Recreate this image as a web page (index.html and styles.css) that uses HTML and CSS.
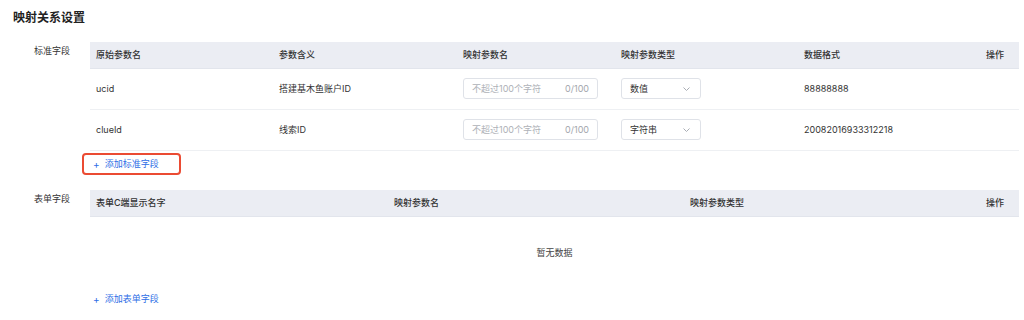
FILE: index.html
```html
<!DOCTYPE html>
<html lang="zh-CN">
<head>
<meta charset="utf-8">
<title>映射关系设置</title>
<link rel="stylesheet" href="styles.css">
</head>
<body>
<div class="page">
  <h1 class="title">映射关系设置</h1>

  <section class="section">
    <div class="label">标准字段</div>
    <div class="content">
      <table class="tbl std">
        <colgroup>
          <col class="c1"><col class="c2"><col class="c3"><col class="c4"><col class="c5"><col class="c6">
        </colgroup>
        <thead>
          <tr><th>原始参数名</th><th>参数含义</th><th>映射参数名</th><th>映射参数类型</th><th>数据格式</th><th class="op">操作</th></tr>
        </thead>
        <tbody>
          <tr>
            <td>ucid</td>
            <td>搭建基木鱼账户ID</td>
            <td><div class="input"><span class="ph">不超过100个字符</span><span class="count">0/100</span></div></td>
            <td><div class="select"><span>数值</span><svg class="chev" width="7" height="4" viewBox="0 0 7 4"><polyline points="0.5,0.5 3.5,3.5 6.5,0.5" fill="none" stroke="#a9adb4" stroke-width="1"/></svg></div></td>
            <td>88888888</td>
            <td></td>
          </tr>
          <tr>
            <td>clueId</td>
            <td>线索ID</td>
            <td><div class="input"><span class="ph">不超过100个字符</span><span class="count">0/100</span></div></td>
            <td><div class="select"><span>字符串</span><svg class="chev" width="7" height="4" viewBox="0 0 7 4"><polyline points="0.5,0.5 3.5,3.5 6.5,0.5" fill="none" stroke="#a9adb4" stroke-width="1"/></svg></div></td>
            <td>20082016933312218</td>
            <td></td>
          </tr>
        </tbody>
      </table>
      <button class="add highlighted" type="button"><span class="plus">+</span>添加标准字段</button>
    </div>
  </section>

  <section class="section second">
    <div class="label">表单字段</div>
    <div class="content">
      <table class="tbl form">
        <colgroup>
          <col class="d1"><col class="d2"><col class="d3"><col class="c6">
        </colgroup>
        <thead>
          <tr><th>表单C端显示名字</th><th>映射参数名</th><th>映射参数类型</th><th class="op">操作</th></tr>
        </thead>
        <tbody>
          <tr><td colspan="4" class="empty">暂无数据</td></tr>
        </tbody>
      </table>
      <button class="add" type="button"><span class="plus">+</span>添加表单字段</button>
    </div>
  </section>
</div>
</body>
</html>
```

FILE: styles.css
```css
* { box-sizing: border-box; }

html, body {
  margin: 0;
  padding: 0;
  background: #ffffff;
}

body {
  font-family: Inter, "Noto Sans CJK SC", sans-serif;
  color: #333333;
  font-size: 9px;
}

.page {
  padding: 10px 5px 0 13px;
}

.title {
  margin: 0 0 16px 0;
  font-size: 12px;
  line-height: 16px;
  font-weight: 600;
  color: #222222;
}

.section {
  display: grid;
  grid-template-columns: 57px 929px;
  column-gap: 20px;
  align-items: start;
}

.section.second {
  margin-top: 15px;
}

.label {
  text-align: right;
  font-size: 9px;
  line-height: 12px;
  padding-top: 3px;
  color: #333333;
}

.content {
  display: flex;
  flex-direction: column;
  align-items: flex-start;
}

.tbl {
  width: 929px;
  border-collapse: collapse;
  table-layout: fixed;
}

.tbl col.c1 { width: 183px; }
.tbl col.c2 { width: 184px; }
.tbl col.c3 { width: 158px; }
.tbl col.c4 { width: 183px; }
.tbl col.c5 { width: 161px; }
.tbl col.c6 { width: 60px; }
.tbl col.d1 { width: 298px; }
.tbl col.d2 { width: 296px; }
.tbl col.d3 { width: 275px; }

.tbl th {
  height: 26px;
  padding: 0 6px;
  background: #ebedf3;
  text-align: left;
  font-weight: 500;
  font-size: 9px;
  color: #333333;
  border-bottom: 1px solid #e2e5ec;
  white-space: nowrap;
}

.tbl.form th { height: 27px; }

.tbl th.op {
  text-align: right;
  padding-right: 15px;
}

.tbl td {
  height: 41px;
  padding: 0 6px;
  border-bottom: 1px solid #eef0f3;
  font-size: 9px;
  color: #333333;
  white-space: nowrap;
}

.tbl td.empty {
  height: 71px;
  text-align: center;
  border-bottom: none;
  color: #444444;
}

.input {
  width: 135px;
  height: 21px;
  border: 1px solid #dfe2e8;
  border-radius: 3px;
  display: flex;
  align-items: center;
  justify-content: space-between;
  padding: 0 8px 0 8px;
  background: #fff;
}

.input .ph { color: #aeb1b7; }
.input .count { color: #a3a6ad; }

.select {
  width: 80px;
  height: 21px;
  border: 1px solid #dfe2e8;
  border-radius: 3px;
  display: flex;
  align-items: center;
  justify-content: space-between;
  padding: 0 10px 0 8px;
  background: #fff;
  color: #333333;
}

.chev { display: block; }

.add {
  margin-left: -8px;
  height: 22px;
  display: inline-flex;
  align-items: center;
  padding: 0 20px 0 9px;
  border: 2px solid transparent;
  border-radius: 4px;
  background: transparent;
  color: #2d6ee6;
  font-family: Inter, "Noto Sans CJK SC", sans-serif;
  font-size: 9px;
  cursor: pointer;
}

.add.highlighted {
  margin-top: 2px;
  border-color: #eb4b33;
}

.add .plus {
  font-size: 10px;
  margin-right: 5px;
}
```
